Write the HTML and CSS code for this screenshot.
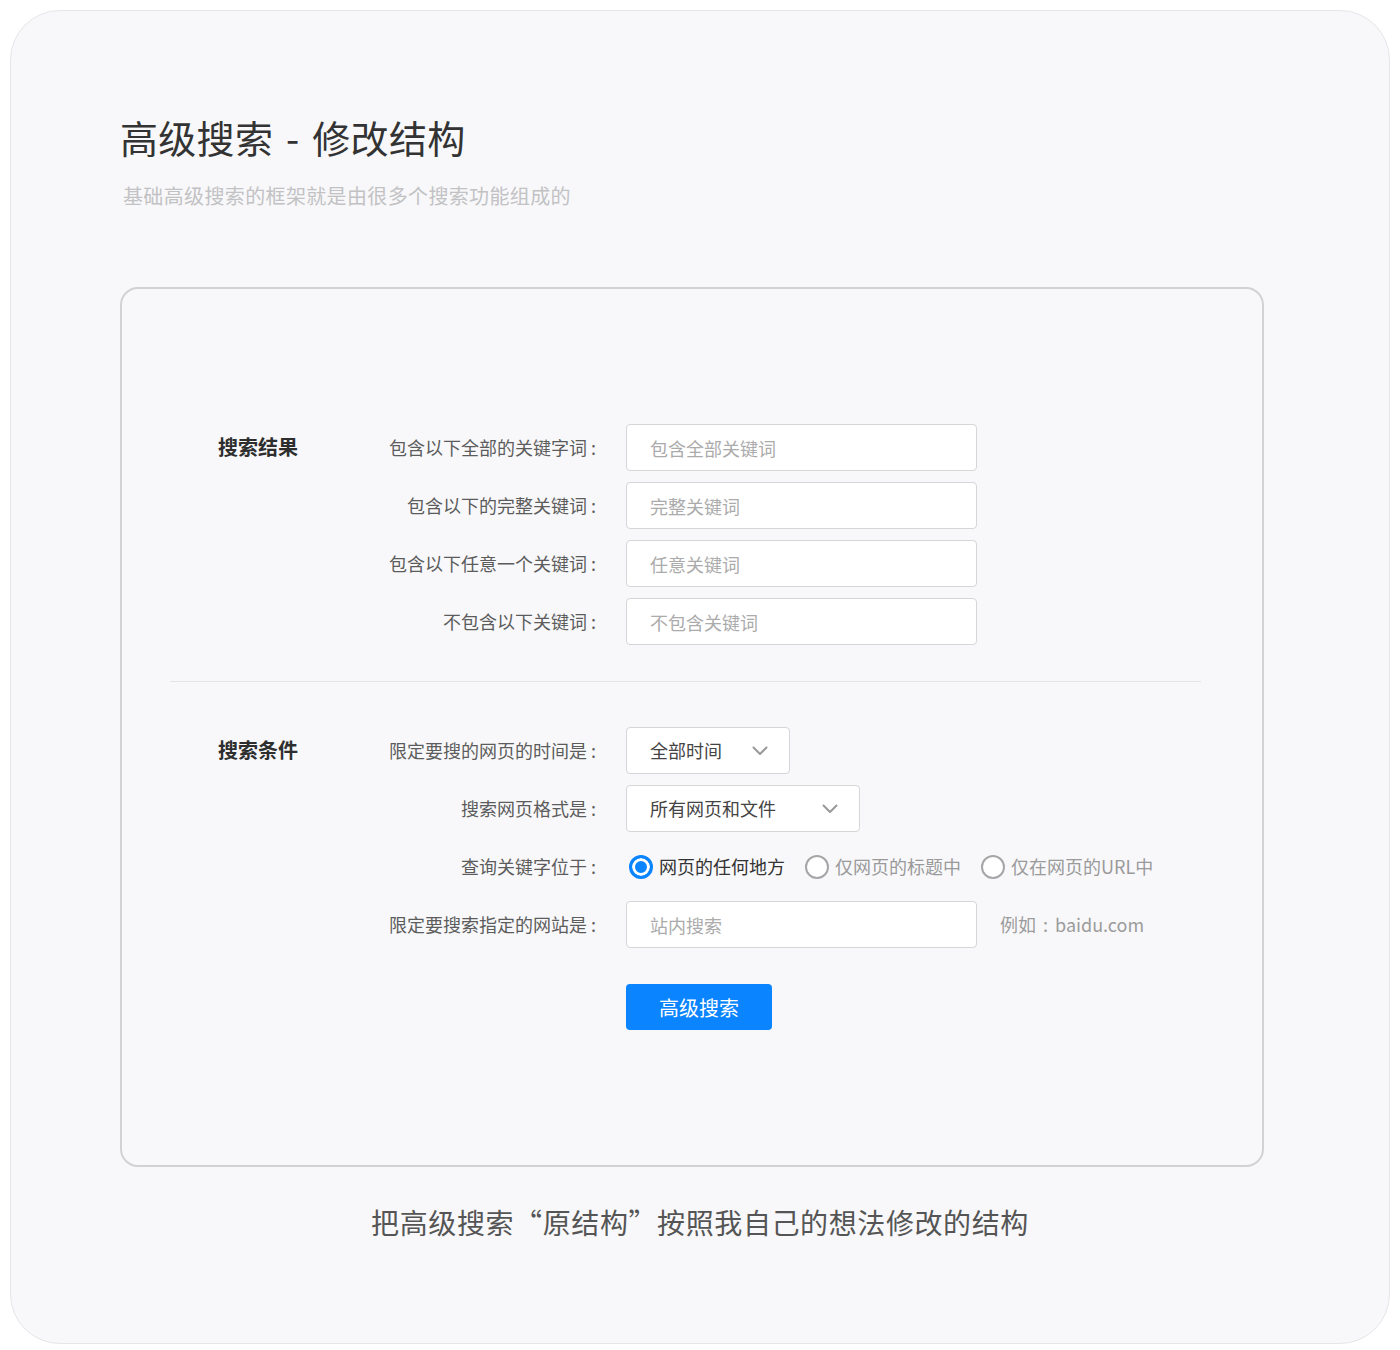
FILE: index.html
```html
<!DOCTYPE html>
<html lang="zh-CN">
	<head>
		<meta charset="UTF-8">
		<title>高级搜索 - 修改结构</title>
		<link rel="stylesheet" href="styles.css">
	</head>
	<body>
		<div class="card">
			<h1 class="title">高级搜索 - 修改结构</h1>
			<p class="subtitle">基础高级搜索的框架就是由很多个搜索功能组成的</p>

			<div class="panel">
				<!-- 搜索结果 -->
				<div class="section">
					<h2 class="section-title">搜索结果</h2>
					<div class="rows">
						<div class="row">
							<label class="row-label">包含以下全部的关键字词 :</label>
							<input class="field" type="text" placeholder="包含全部关键词">
						</div>
						<div class="row">
							<label class="row-label">包含以下的完整关键词 :</label>
							<input class="field" type="text" placeholder="完整关键词">
						</div>
						<div class="row">
							<label class="row-label">包含以下任意一个关键词 :</label>
							<input class="field" type="text" placeholder="任意关键词">
						</div>
						<div class="row">
							<label class="row-label">不包含以下关键词 :</label>
							<input class="field" type="text" placeholder="不包含关键词">
						</div>
					</div>
				</div>

				<div class="divider"></div>

				<!-- 搜索条件 -->
				<div class="section">
					<h2 class="section-title">搜索条件</h2>
					<div class="rows">
						<div class="row">
							<label class="row-label">限定要搜的网页的时间是 :</label>
							<div class="select select-time">
								<span>全部时间</span>
								<svg class="arrow" width="16" height="10" viewBox="0 0 16 10"><path d="M1.5 1.5 L8 8 L14.5 1.5" fill="none" stroke="#999" stroke-width="2" stroke-linecap="round" stroke-linejoin="round"/></svg>
							</div>
						</div>
						<div class="row">
							<label class="row-label">搜索网页格式是 :</label>
							<div class="select select-type">
								<span>所有网页和文件</span>
								<svg class="arrow" width="16" height="10" viewBox="0 0 16 10"><path d="M1.5 1.5 L8 8 L14.5 1.5" fill="none" stroke="#999" stroke-width="2" stroke-linecap="round" stroke-linejoin="round"/></svg>
							</div>
						</div>
						<div class="row">
							<label class="row-label">查询关键字位于 :</label>
							<div class="radios">
								<span class="radio checked"><i></i>网页的任何地方</span>
								<span class="radio"><i></i>仅网页的标题中</span>
								<span class="radio"><i></i>仅在网页的URL中</span>
							</div>
						</div>
						<div class="row">
							<label class="row-label">限定要搜索指定的网站是 :</label>
							<input class="field" type="text" placeholder="站内搜索">
							<span class="hint">例如 : baidu.com</span>
						</div>
						<div class="row row-submit">
							<button class="btn" type="button">高级搜索</button>
						</div>
					</div>
				</div>
			</div>

			<p class="caption">把高级搜索“原结构”按照我自己的想法修改的结构</p>
		</div>
	</body>
</html>
```

FILE: styles.css
```css
*{
	margin: 0;
	padding: 0;
	box-sizing: border-box;
}
body{
	background: #fff;
	padding: 10px;
	font-family: "Noto Sans CJK SC", "Noto Sans", sans-serif;
	color: #333;
}

/* 外层卡片 */
.card{
	width: 1380px;
	height: 1334px;
	background: #f8f8fa;
	border: 1px solid #e6e6e8;
	border-radius: 50px;
	padding: 101px 0 0 109px;
}
.title{
	font-size: 38px;
	font-weight: 400;
	line-height: 50px;
	color: #333;
	word-spacing: 4px;
	letter-spacing: 0.3px;
}
.subtitle{
	margin-top: 19px;
	font-size: 20px;
	line-height: 30px;
	color: #c2c2c4;
	padding-left: 3px;
	letter-spacing: 0.36px;
}

/* 表单面板 */
.panel{
	width: 1144px;
	margin-top: 76px;
	border: 2px solid #d2d2d4;
	border-radius: 18px;
	padding: 135px 0 135px 96px;
}
.section{
	display: flex;
}
.section-title{
	width: 140px;
	font-size: 20px;
	font-weight: 700;
	line-height: 45px;
	color: #2e2e2e;
}
.rows{
	display: flex;
	flex-direction: column;
	gap: 11px;
}
.row{
	display: flex;
	align-items: center;
	height: 47px;
	line-height: 45px;
}
.row-label{
	width: 238px;
	margin-right: 30px;
	text-align: right;
	font-size: 18px;
	color: #5c5c5c;
}
.field{
	width: 351px;
	height: 47px;
	background: #fff;
	border: 1px solid #d6d6d8;
	border-radius: 4px;
	padding: 0 23px;
	font-family: inherit;
	font-size: 18px;
	color: #333;
	outline: none;
}
.field::placeholder{
	color: #ababab;
}
.divider{
	height: 1px;
	background: #e4e4e6;
	margin: 36px 61px 45px -48px;
}

/* 下拉框 */
.select{
	height: 47px;
	display: flex;
	align-items: center;
	justify-content: space-between;
	background: #fff;
	border: 1px solid #d6d6d8;
	border-radius: 4px;
	padding: 0 21px 0 23px;
	font-size: 18px;
	color: #444;
}
.select-time{
	width: 164px;
}
.select-type{
	width: 234px;
}

/* 单选 */
.radios{
	display: flex;
	gap: 17px;
}
.radio{
	display: flex;
	align-items: center;
	font-size: 18px;
	color: #9a9a9a;
}
.radio i{
	width: 24px;
	height: 24px;
	margin: 0 6px 0 3px;
	border: 2px solid #a6a6a8;
	border-radius: 50%;
	background: #fff;
}
.radio.checked{
	color: #333;
}
.radio.checked i{
	border: 3px solid #0a84ff;
	box-shadow: inset 0 0 0 3px #fff;
	background: #0a84ff;
}
.hint{
	margin-left: 23px;
	font-size: 18px;
	color: #9c9c9c;
	word-spacing: 3px;
}

/* 按钮 */
.row-submit{
	margin-top: 25px;
	padding-left: 268px;
	height: 46px;
}
.btn{
	width: 146px;
	height: 46px;
	border: none;
	border-radius: 4px;
	background: #0a84ff;
	color: #fff;
	font-family: inherit;
	font-size: 20px;
}

.caption{
	margin: 35px 0 0 -109px;
	width: 1378px;
	text-align: center;
	font-size: 28px;
	line-height: 40px;
	color: #555;
	letter-spacing: 0.6px;
}
```
